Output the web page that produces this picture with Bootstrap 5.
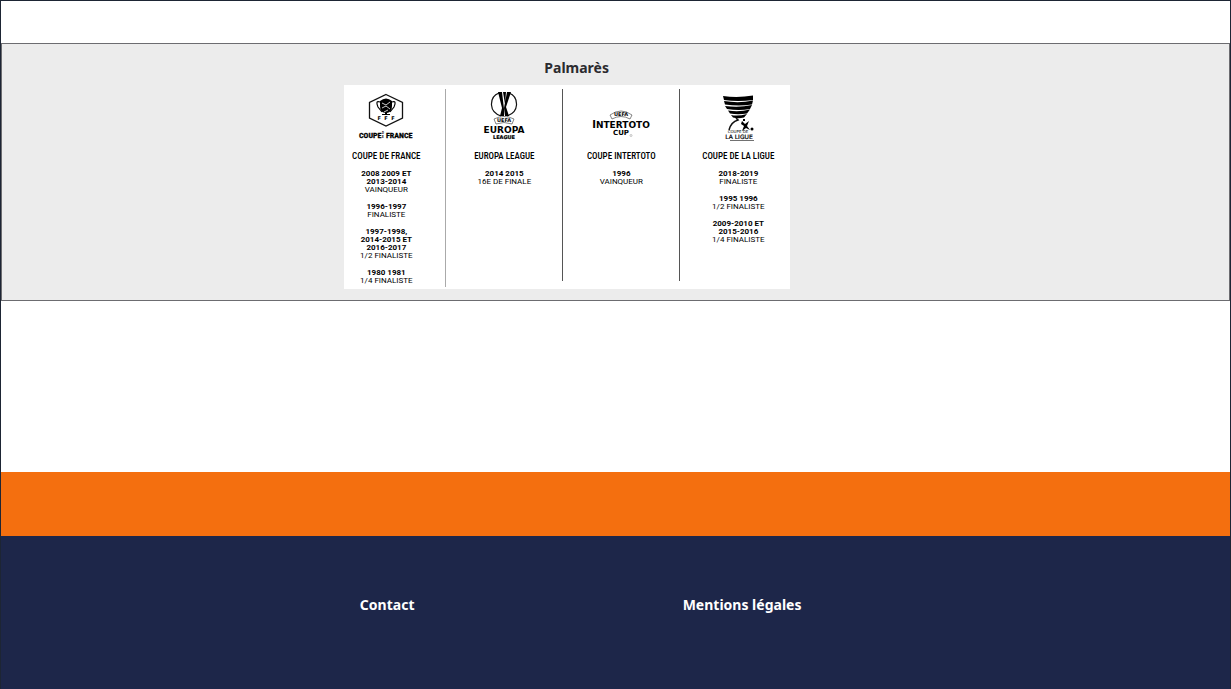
<!DOCTYPE html>
<html lang="fr">
<head>
<meta charset="utf-8">
<meta name="viewport" content="width=device-width, initial-scale=1">
<title>Palmarès</title>
<link href="https://cdn.jsdelivr.net/npm/bootstrap@5.3.0/dist/css/bootstrap.min.css" rel="stylesheet">
<style>
  body { font-family: "Noto Sans", "Open Sans", sans-serif; color: #2b2b2f; }
  .page-frame { border: solid #1d2534; border-width: 1px 1px 0; }
  .top-space { height: 42px; }
  .honours { background: #ececec; border: 1px solid #6c6c70; padding: 14px 0 11px; }
  .honours h2 { font-size: 14px; line-height: 20px; font-weight: 700; margin: 0 0 7px 44.2%; }
  .board { width: 446px; margin-left: 27.9%; background: #fff; color: #000; grid-template-columns: 102px 117px 117px 110px; height: 204px; padding-top: 4px; font-family: Roboto, sans-serif; }
  .cup { text-align: center; border-right: 1px solid #555; height: 192px; }
  .cup-first { padding-right: 17px; border-color: #aaa; height: 198px; }
  .cup-last { padding-left: 6px; border-right: 0; }
  .cup svg { display: block; margin: 0 auto; }
  .cup h3 { font: 500 9px/12px "Roboto Condensed", "Liberation Sans Narrow", Roboto, sans-serif; margin: 4px 0 8px; white-space: nowrap; }
  .cup p { font-size: 8px; line-height: 8px; margin: 0 0 9px; white-space: nowrap; }
  .cup strong { font-weight: 700; }
  .narrow { font: 700 8px "Roboto Condensed", "Liberation Sans Narrow", Roboto, sans-serif; }
  .middle-space { height: 171px; }
  .band { background: #f46f0f; height: 64px; }
  .foot { background: #1d2649; padding: 58px 0 0 29.2%; }
  .foot a { color: #fff; font-size: 14px; line-height: 22px; font-weight: 700; text-decoration: none; width: 37.1%; }
</style>
</head>
<body>
<div class="page-frame d-flex flex-column min-vh-100">
  <header class="top-space"></header>
  <main>
    <section class="honours">
      <h2>Palmarès</h2>
      <div class="board d-grid">
        <article class="cup cup-first">
          <svg width="84" height="57" viewBox="0 0 84 57" role="img" aria-label="Coupe de France">
            <path d="M42 5.500 58.500 13.500V29L42 37 25.500 29V13.500Z" fill="none" stroke="#111" stroke-width="1.300"/>
            <path d="M36 12Q42 7 48 12V17Q48 23 43 24V25H46V26H38V25H41V24Q36 23 36 17Z"/>
            <path d="M36 13Q31 11 34 18L38 23M48 13Q53 11 50 18L46 23" fill="none" stroke="#000" stroke-width="1.200"/>
            <path d="M38 14 42 16 46 13M38 19 42 17 46 20M40 23 44 21" fill="none" stroke="#fff" stroke-width=".8"/>
            <text x="42" y="31" text-anchor="middle" font-family="DejaVu Sans" font-size="5" font-weight="700" xml:space="preserve">F  F  F</text>
            <text x="15" y="49" class="narrow" stroke="#000" stroke-width=".3">COUPE</text>
            <text x="38" y="45" font-family="Roboto" font-size="3" font-weight="700">D</text>
            <text x="38" y="49" font-family="Roboto" font-size="3" font-weight="700">E</text>
            <text x="42" y="49" class="narrow" stroke="#000" stroke-width=".3">FRANCE</text>
          </svg>
          <h3>COUPE DE FRANCE</h3>
          <p><strong>2008 2009 ET<br>2013-2014</strong><br>VAINQUEUR</p>
          <p><strong>1996-1997</strong><br>FINALISTE</p>
          <p><strong>1997-1998,<br>2014-2015 ET<br>2016-2017</strong><br>1/2 FINALISTE</p>
          <p><strong>1980 1981</strong><br>1/4 FINALISTE</p>
        </article>
        <article class="cup">
          <svg width="84" height="57" viewBox="0 0 84 57" role="img" aria-label="UEFA Europa League">
            <path d="M37 4Q29 7 29.500 16Q30 24 39 27M47 4Q55 7 54.500 16Q54 24 45 27" fill="none" stroke="#111" stroke-width="1.200"/>
            <path d="M36 3H40L42 20V27H38L40 19ZM41 3H44L43 15ZM45 3H49L44 18 47 27H43L42 19Z"/>
            <path d="M32 30Q42 25 52 30L50 35Q42 32 34 35Z" fill="none" stroke="#333" stroke-width=".6"/>
            <text x="42" y="33" text-anchor="middle" font-family="DejaVu Sans" font-size="5" font-weight="700">UEFA</text>
            <text x="42" y="44" text-anchor="middle" font-family="DejaVu Sans" font-size="9" font-weight="700">EUROPA</text>
            <text x="42" y="50" text-anchor="middle" font-family="DejaVu Sans" font-size="5" font-weight="700" stroke="#000" stroke-width=".2">LEAGUE</text>
          </svg>
          <h3>EUROPA LEAGUE</h3>
          <p><strong>2014 2015</strong><br>16E DE FINALE</p>
        </article>
        <article class="cup">
          <svg width="84" height="57" viewBox="0 0 84 57" role="img" aria-label="UEFA Intertoto Cup">
            <path d="M31 26Q42 18 53 26L51 30Q42 25 33 30Z" fill="none" stroke="#333" stroke-width=".6"/>
            <text x="42" y="27" text-anchor="middle" font-family="DejaVu Sans" font-size="5" font-weight="700">UEFA</text>
            <text x="42" y="39" text-anchor="middle" font-family="DejaVu Sans" font-size="10" font-weight="700">I<tspan font-size="9">NTERTOTO</tspan></text>
            <text x="42" y="46" text-anchor="middle" font-family="DejaVu Sans" font-size="7" font-weight="700">CUP</text>
            <circle cx="52" cy="46.500" r="1" fill="none" stroke="#888" stroke-width=".5"/>
          </svg>
          <h3>COUPE INTERTOTO</h3>
          <p><strong>1996</strong><br>VAINQUEUR</p>
        </article>
        <article class="cup cup-last">
          <svg width="84" height="57" viewBox="0 0 84 57" role="img" aria-label="Coupe de la Ligue">
            <path d="M27 7Q42 9 57 6.500V11Q42 13 28 11ZM28 12Q43 14.500 57 11.500L56 15.500Q43 17.500 29 15.500ZM29 17Q43 19 56 16L54 20Q43 22 31 20ZM32 21.500Q43 23.500 54 20.500L51 24.500Q42 26 34 24.500ZM35 26Q42 27.500 51 25L48 28.500Q42 30 37 28.500Z"/>
            <path d="M40 29 42 31Q35 33 33 41" fill="none" stroke="#111" stroke-width="1.500"/>
            <path d="M46 32 49 35 53 32 51 37 54 41 50 39 46 42 48 37 45 35ZM47 30h2v2h-2z"/>
            <circle cx="56" cy="40" r="1.500"/>
            <text x="42" y="44" text-anchor="middle" font-family="DejaVu Sans" font-size="4">COUPE DE</text>
            <text x="43" y="50" text-anchor="middle" font-family="DejaVu Sans" font-size="6" stroke="#000" stroke-width=".2">LA LIGUE</text>
            <path d="M34 51.500H58" stroke="#333" stroke-width=".7"/>
          </svg>
          <h3>COUPE DE LA LIGUE</h3>
          <p><strong>2018-2019</strong><br>FINALISTE</p>
          <p><strong>1995 1996</strong><br>1/2 FINALISTE</p>
          <p><strong>2009-2010 ET<br>2015-2016</strong><br>1/4 FINALISTE</p>
        </article>
      </div>
    </section>
  </main>
  <div class="middle-space"></div>
  <div class="band"></div>
  <footer class="foot d-flex align-items-start flex-grow-1">
    <a href="#">Contact</a>
    <a href="#">Mentions légales</a>
  </footer>
</div>
<script src="https://cdn.jsdelivr.net/npm/bootstrap@5.3.0/dist/js/bootstrap.bundle.min.js"></script>
</body>
</html>
